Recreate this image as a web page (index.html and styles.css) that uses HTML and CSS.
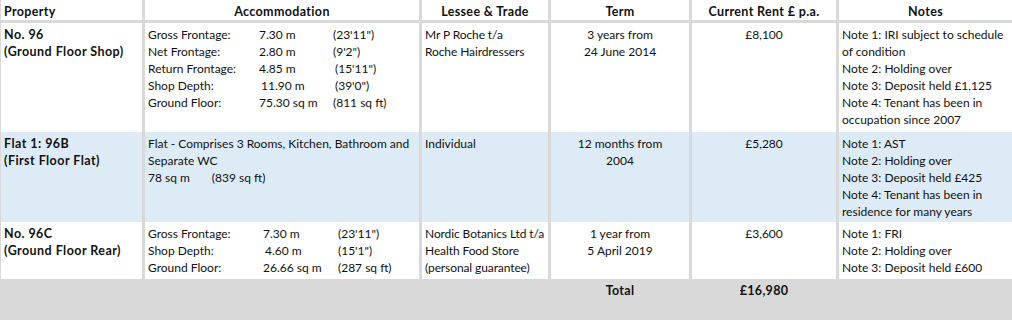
FILE: index.html
```html
<!DOCTYPE html>
<html>
<head>
<meta charset="utf-8">
<link rel="stylesheet" href="styles.css">
</head>
<body>
<div class="sheet">
  <div class="cell hd first left">Property</div>
  <div class="cell hd">Accommodation</div>
  <div class="cell hd">Lessee &amp; Trade</div>
  <div class="cell hd">Term</div>
  <div class="cell hd">Current Rent £ p.a.</div>
  <div class="cell hd">Notes</div>

  <div class="cell r1 first bold">No. 96<br>(Ground Floor Shop)</div>
  <div class="cell r1 acc">
    <div class="m"><span>Gross Frontage:</span><span>7.30 m</span><span>(23'11")</span></div>
    <div class="m"><span>Net Frontage:</span><span>2.80 m</span><span>(9'2")</span></div>
    <div class="m"><span>Return Frontage:</span><span>4.85 m</span><span class="sh">(15'11")</span></div>
    <div class="m"><span>Shop Depth:</span><span class="sh">11.90 m</span><span class="sh">(39'0")</span></div>
    <div class="m"><span>Ground Floor:</span><span>75.30 sq m</span><span>(811 sq ft)</span></div>
  </div>
  <div class="cell r1 nw">Mr P Roche t/a<br>Roche Hairdressers</div>
  <div class="cell r1 c">3 years from<br>24 June 2014</div>
  <div class="cell r1 c">£8,100</div>
  <div class="cell r1">Note 1: IRI subject to schedule of condition<br>Note 2: Holding over<br>Note 3: Deposit held £1,125<br>Note 4: Tenant has been in occupation since 2007</div>

  <div class="cell r2 first bold blue">Flat 1: 96B<br>(First Floor Flat)</div>
  <div class="cell r2 blue acc">Flat - Comprises 3 Rooms, Kitchen, Bathroom and Separate WC<br>78 sq m<span class="gap"></span>(839 sq ft)</div>
  <div class="cell r2 blue">Individual</div>
  <div class="cell r2 blue c">12 months from<br>2004</div>
  <div class="cell r2 blue c">£5,280</div>
  <div class="cell r2 blue">Note 1: AST<br>Note 2: Holding over<br>Note 3: Deposit held £425<br>Note 4: Tenant has been in residence for many years</div>

  <div class="cell r3 first bold">No. 96C<br>(Ground Floor Rear)</div>
  <div class="cell r3 acc">
    <div class="m m3"><span>Gross Frontage:</span><span>7.30 m</span><span>(23'11")</span></div>
    <div class="m m3"><span>Shop Depth:</span><span class="sh">4.60 m</span><span>(15'1")</span></div>
    <div class="m m3"><span>Ground Floor:</span><span>26.66 sq m</span><span>(287 sq ft)</span></div>
  </div>
  <div class="cell r3 nw">Nordic Botanics Ltd t/a<br>Health Food Store<br>(personal guarantee)</div>
  <div class="cell r3 c">1 year from<br>5 April 2019</div>
  <div class="cell r3 c">£3,600</div>
  <div class="cell r3">Note 1: FRI<br>Note 2: Holding over<br>Note 3: Deposit held £600</div>

  <div class="total"></div>
  <div class="total"></div>
  <div class="total"></div>
  <div class="total c tb">Total</div>
  <div class="total c tb">£16,980</div>
  <div class="total"></div>
</div>
</body>
</html>
```

FILE: styles.css
```css
html, body {
  margin: 0;
  padding: 0;
  background: #d9d9d9;
}
body {
  font-family: Lato, "Liberation Sans", sans-serif;
  font-size: 12px;
  line-height: 17px;
  color: #111;
}
.sheet {
  display: grid;
  grid-template-columns: 142px 274px 126px 138px 144px 173px;
  grid-template-rows: 23px 109px 90px 57px 41px;
  column-gap: 3px;
  width: 1012px;
  background: #d9d9d9;
}
.cell {
  background: #fff;
  padding: 3px 3px 0 3px;
  box-sizing: border-box;
  overflow: hidden;
}
.hd {
  font-weight: bold;
  font-size: 12.5px;
  letter-spacing: 0.35px;
  text-align: center;
  padding-top: 4px;
  border-bottom: 3px solid #d9d9d9;
  line-height: 15px;
}
.hd.left {
  text-align: left;
}
.first {
  border-left: 1px solid #d9d9d9;
  padding-left: 3px;
}
.bold {
  font-weight: bold;
  font-size: 12.5px;
  letter-spacing: 0.45px;
}
.tb {
  font-weight: bold;
  font-size: 12.5px;
  letter-spacing: 0.3px;
}
.c {
  text-align: center;
}
.nw {
  white-space: nowrap;
  letter-spacing: -0.1px;
}
.blue {
  background: #ddebf7;
}
.m {
  display: grid;
  grid-template-columns: 111px 74px auto;
  white-space: nowrap;
}
.m3 {
  grid-template-columns: 115px 75px auto;
}
.sh {
  padding-left: 2px;
}
.gap {
  display: inline-block;
  width: 22px;
}
.total {
  padding-top: 3px;
  line-height: 17px;
}
```
